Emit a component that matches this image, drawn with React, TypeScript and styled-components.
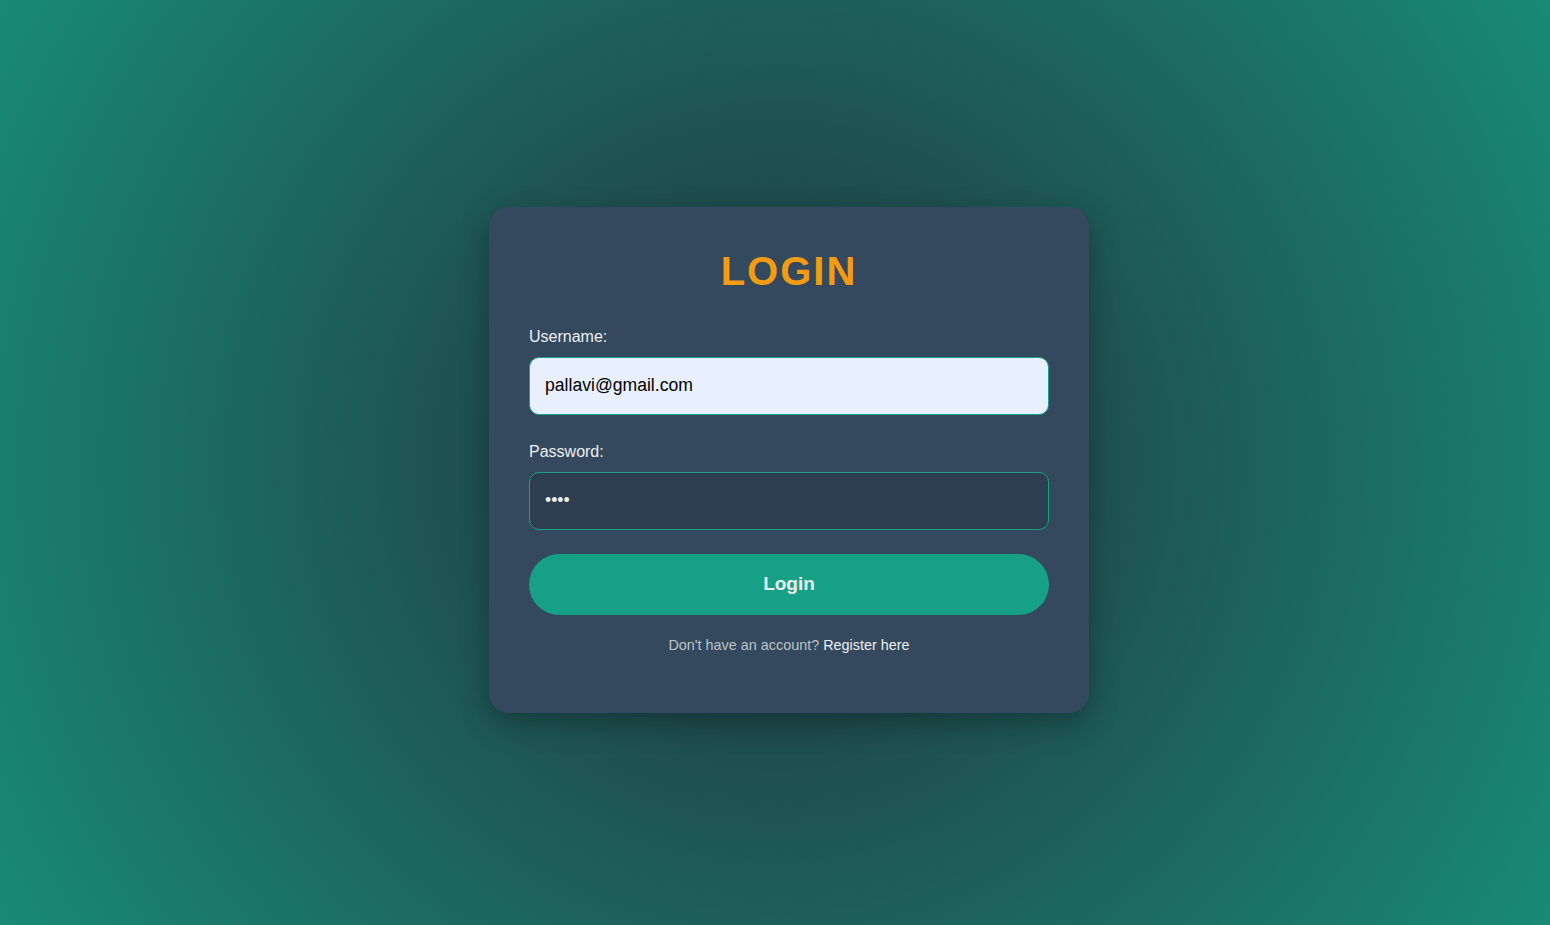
import React, { useState } from "react";
import styled, { createGlobalStyle } from "styled-components";

const GlobalStyle = createGlobalStyle`
  * {
    box-sizing: border-box;
  }
  html, body {
    margin: 0;
    padding: 0;
    height: 100%;
  }
  body {
    font-family: "Liberation Sans", Arial, sans-serif;
  }
`;

export default function App() {
  const [username, setUsername] = useState("pallavi@gmail.com");
  const [password, setPassword] = useState("1234");

  return (
    <>
      <GlobalStyle />
      <Page>
        <Card onSubmit={(e) => e.preventDefault()}>
          <Title>LOGIN</Title>
          <Field>
            <Label htmlFor="username">Username:</Label>
            <Input
              id="username"
              type="text"
              $filled
              value={username}
              onChange={(e) => setUsername(e.target.value)}
            />
          </Field>
          <Field>
            <Label htmlFor="password">Password:</Label>
            <Input
              id="password"
              type="password"
              value={password}
              onChange={(e) => setPassword(e.target.value)}
            />
          </Field>
          <Button type="submit">Login</Button>
          <Footer>
            Don't have an account? <RegisterLink href="#">Register here</RegisterLink>
          </Footer>
        </Card>
      </Page>
    </>
  );
}

const Page = styled.div`
  width: 100%;
  min-height: 100vh;
  display: flex;
  align-items: center;
  justify-content: center;
  background: radial-gradient(circle 1120px at 50% 50%, #22323c 0%, #16a085 100%);
`;

const Card = styled.form`
  width: 600px;
  height: 506px;
  margin: 0 0 6px 28px;
  padding: 41px 40px 40px;
  background: #34495e;
  border-radius: 20px;
  box-shadow: 0 10px 30px rgba(0, 0, 0, 0.3);
  display: flex;
  flex-direction: column;
`;

const Title = styled.h2`
  margin: 0 0 34px;
  text-align: center;
  color: #f39c12;
  font-size: 40px;
  line-height: 46px;
  font-weight: 700;
  letter-spacing: 2px;
`;

const Field = styled.div`
  display: flex;
  flex-direction: column;
  margin-bottom: 24px;

  & + & {
    margin-top: 4px;
  }
`;

const Label = styled.label`
  color: #ecf0f1;
  font-size: 16px;
  line-height: 18px;
  margin-bottom: 11px;
`;

const Input = styled.input<{ $filled?: boolean }>`
  width: 100%;
  height: 58px;
  padding: 0 15px;
  border: 1px solid #16a085;
  border-radius: 10px;
  background: ${(p) => (p.$filled ? "#e8f0fe" : "#2c3e50")};
  color: ${(p) => (p.$filled ? "#000" : "#ecf0f1")};
  font-family: "Liberation Sans", Arial, sans-serif;
  font-size: 17.6px;
  outline: none;
`;

const Button = styled.button`
  width: 100%;
  height: 61px;
  border: none;
  border-radius: 31px;
  background: #16a085;
  color: #ecf0f1;
  font-family: "Liberation Sans", Arial, sans-serif;
  font-size: 19px;
  font-weight: 700;
  cursor: pointer;
`;

const Footer = styled.p`
  margin: 22px 0 0;
  text-align: center;
  color: #bdc3c7;
  font-size: 14.4px;
  line-height: 16px;
`;

const RegisterLink = styled.a`
  color: #ecf0f1;
  text-decoration: none;
`;
